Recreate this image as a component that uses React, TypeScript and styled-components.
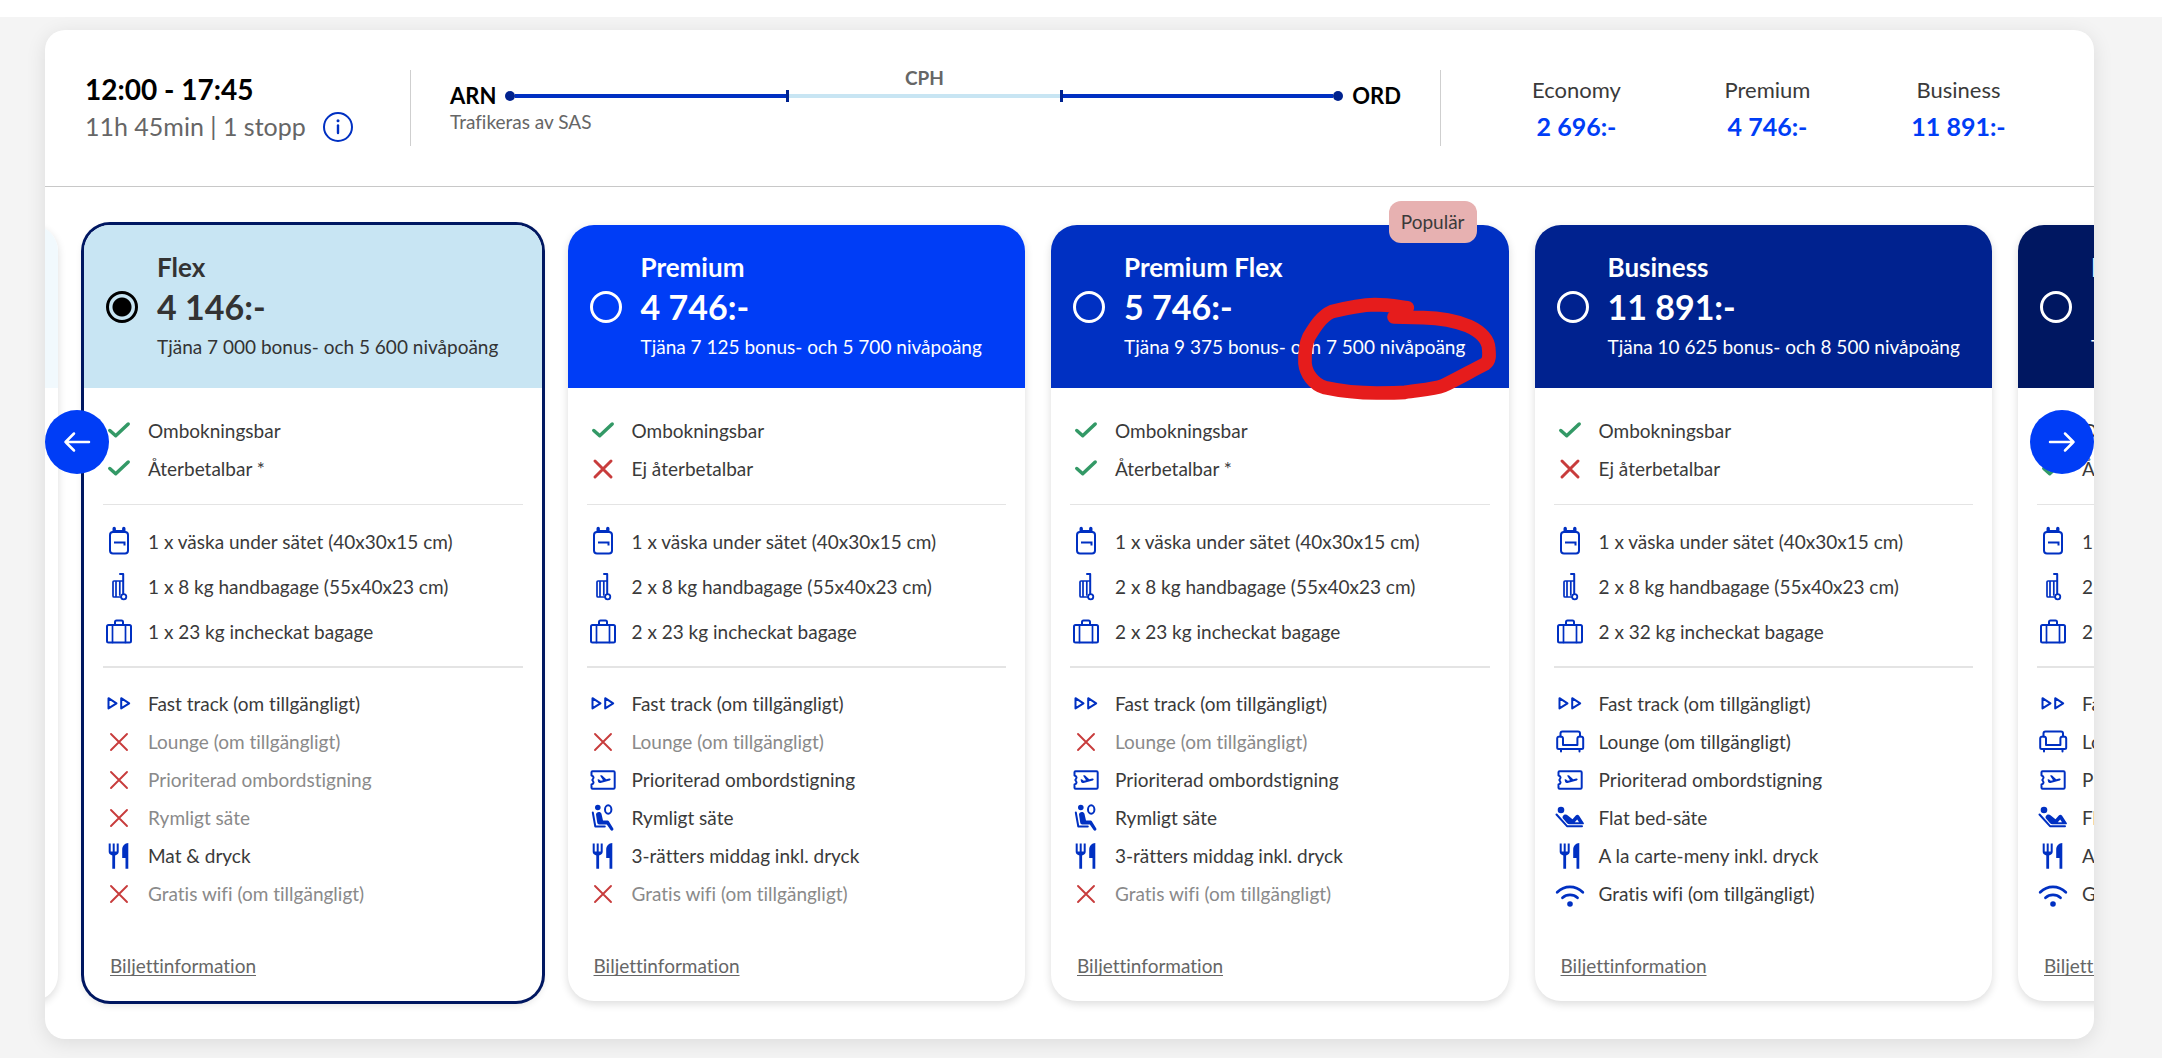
import React, { useState } from "react";
import styled, { createGlobalStyle } from "styled-components";

const color = {
  ink: "#3a3a3a",
  muted: "#8a8a8a",
  grey: "#666666",
  blue: "#003df6",
  deep: "#0030c2",
  navy: "#001761",
  rule: "#e4e4e4",
};

const GlobalStyle = createGlobalStyle`
  *, *::before, *::after { box-sizing: border-box; }
  body {
    margin: 0;
    background: #f4f4f4;
    color: ${color.ink};
    font-family: Lato, "Open Sans", sans-serif;
    font-size: 19px;
    font-variant-ligatures: none;
  }
`;

/* ---------- page ---------- */

const Page = styled.div`
  border-top: 17px solid #ffffff;
  padding: 13px 68px 19px 45px;
  overflow: hidden;
`;

const Panel = styled.article`
  position: relative;
  background: #ffffff;
  border-radius: 20px;
  box-shadow: 0 4px 20px rgba(0, 0, 0, 0.1);
  overflow: hidden;
`;

/* ---------- flight summary ---------- */

const Summary = styled.header`
  display: flex;
  padding: 40px 0;
  border-bottom: 1px solid #c8c8c8;
`;

const Times = styled.div`
  flex: none;
  width: 366px;
  padding-left: 40px;
  border-right: 1px solid #cfcfcf;
  display: flex;
  flex-direction: column;
  justify-content: center;
`;

const TimeRange = styled.h2`
  margin: 0;
  font-size: 28px;
  line-height: 37px;
  font-weight: 700;
  color: #000000;
`;

const Duration = styled.div`
  display: flex;
  align-items: center;
  gap: 16px;
  font-size: 25px;
  line-height: 37px;
  color: ${color.grey};
`;

const InfoButton = styled.button`
  display: flex;
  padding: 0;
  border: 0;
  background: none;
  color: ${color.deep};
  cursor: pointer;
`;

const Route = styled.div`
  flex: 1;
  min-width: 0;
  padding: 0 39px;
  display: grid;
  grid-template-columns: auto 1fr auto;
  grid-template-rows: 16px 20px 40px;
  column-gap: 9px;
  align-items: center;
`;

const StopCode = styled.span`
  grid-column: 2;
  justify-self: center;
  font-size: 19px;
  line-height: 16px;
  font-weight: 700;
  color: ${color.grey};
`;

const Airport = styled.span<{ $column: number }>`
  grid-column: ${(p) => p.$column};
  grid-row: 2;
  font-size: 22px;
  line-height: 20px;
  font-weight: 700;
  color: #000000;
`;

const Track = styled.div`
  grid-column: 2;
  grid-row: 2;
  display: flex;
  align-items: center;
`;

const Dot = styled.i`
  width: 10px;
  height: 10px;
  border-radius: 50%;
  background: #00228f;
`;

const Tick = styled.i`
  width: 3px;
  height: 12px;
  background: #00228f;
`;

const Leg = styled.i<{ $wait?: boolean }>`
  flex: 1;
  height: 4px;
  background: ${(p) => (p.$wait ? "#c8e5f3" : color.deep)};
`;

const Carrier = styled.span`
  grid-column: 1 / -1;
  grid-row: 3;
  align-self: start;
  line-height: 32px;
  color: ${color.grey};
`;

const Cabins = styled.dl`
  flex: none;
  width: 654px;
  margin: 0;
  padding: 0 40px;
  border-left: 1px solid #cfcfcf;
  display: grid;
  grid-template-columns: repeat(3, 1fr);
  align-content: center;
  text-align: center;
`;

const CabinName = styled.dt`
  font-size: 22px;
  line-height: 37px;
`;

const CabinPrice = styled.dd`
  margin: 0;
  font-size: 25px;
  line-height: 37px;
  font-weight: 700;
  color: ${color.blue};
`;

/* ---------- fare carousel ---------- */

const Fares = styled.section`
  position: relative;
  overflow: hidden;
  padding: 38px 0;
`;

const Cards = styled.div`
  --card: calc((100% - 219px) / 4);
  display: grid;
  grid-auto-flow: column;
  grid-auto-columns: var(--card);
  column-gap: 26px;
  width: 100%;
  margin-left: calc(13px - (100% - 219px) / 4);
`;

const Card = styled.div<{ $selected?: boolean }>`
  position: relative;
  display: flex;
  flex-direction: column;
  border-radius: 26px;
  background: #ffffff;
  box-shadow: ${(p) => (p.$selected ? `0 0 0 3px ${color.navy}, ` : "")}0 3px 8px rgba(0, 0, 0, 0.14);
`;

const CardHead = styled.label<{ $bg: string; $dark?: boolean }>`
  display: flex;
  align-items: center;
  gap: 19px;
  height: 163px;
  padding-left: 22px;
  border-radius: 26px 26px 0 0;
  background: ${(p) => p.$bg};
  color: ${(p) => (p.$dark ? "#333333" : "#ffffff")};
  white-space: nowrap;
  cursor: pointer;
`;

const Radio = styled.input`
  appearance: none;
  flex: none;
  width: 32px;
  height: 32px;
  margin: 0;
  border: 3px solid #ffffff;
  border-radius: 50%;
  cursor: pointer;
  &:checked {
    border-color: #000000;
    background: radial-gradient(circle, #000000 9px, transparent 10px);
  }
`;

const FareName = styled.strong`
  display: block;
  font-size: 26px;
  line-height: 36px;
  font-weight: 700;
`;

const FarePrice = styled.strong`
  display: block;
  font-size: 34px;
  line-height: 44px;
  font-weight: 700;
`;

const Points = styled.span`
  display: block;
  line-height: 36px;
`;

const Badge = styled.span`
  position: absolute;
  top: -24px;
  right: 32px;
  padding: 0 12px;
  border-radius: 12px;
  background: #e7b1b1;
  color: ${color.ink};
  line-height: 42px;
`;

const Marker = styled.svg`
  position: absolute;
  z-index: 2;
  top: -35px;
  left: 239px;
  pointer-events: none;
`;

const CardBody = styled.div`
  padding: 24px 19px 23px;
`;

const Group = styled.ul<{ $row: number }>`
  margin: 0;
  padding: 0;
  list-style: none;
  line-height: ${(p) => p.$row}px;
`;

const Item = styled.li<{ $off?: boolean }>`
  display: flex;
  align-items: center;
  gap: 13px;
  white-space: nowrap;
  color: ${(p) => (p.$off ? color.muted : color.ink)};
`;

const Rule = styled.hr<{ $weight: number }>`
  margin: ${(p) => (p.$weight === 1 ? "16px 0 14px" : "12px 0 17px")};
  border: 0;
  border-top: ${(p) => p.$weight}px solid ${color.rule};
`;

const TicketLink = styled.a`
  display: inline-block;
  margin: 41px 0 0 7px;
  line-height: 24px;
  color: ${color.grey};
  text-decoration: underline;
  text-decoration-skip-ink: none;
  text-underline-offset: 2px;
`;

const Arrow = styled.button<{ $side: "left" | "right" }>`
  position: absolute;
  z-index: 3;
  top: 223px;
  ${(p) => p.$side}: 0;
  display: grid;
  place-items: center;
  width: 64px;
  height: 64px;
  padding: 0;
  border: 0;
  border-radius: 50%;
  background: ${color.blue};
  color: #ffffff;
  cursor: pointer;
`;

/* ---------- icons ---------- */

const Glyph = styled.svg`
  flex: none;
  display: block;
  width: 32px;
  height: 32px;
  fill: none;
  stroke: currentColor;
  stroke-width: 2;
  stroke-linecap: round;
  stroke-linejoin: round;
`;

const iconColor: Record<string, string> = {
  check: "#339966",
  cross: "#c83c3c",
  crossThin: "#c83c3c",
};

const shapes: Record<string, React.ReactNode> = {
  check: <path d="M6.8 15.5 12.7 20.7 25.2 9" strokeWidth="3.5" />,
  cross: <path d="M8 8 24 24M24 8 8 24" strokeWidth="3" />,
  crossThin: <path d="M8 8 24 24M24 8 8 24" strokeWidth="1.9" />,
  backpack: (
    <>
      <rect x="7" y="6" width="18" height="21.5" rx="3" />
      <path d="M9.5 5V2.5a1.6 1.6 0 0 1 3.4 0V4h6.2V2.5a1.6 1.6 0 0 1 3.4 0V5l1.5 2h-16z" fill="currentColor" stroke="none" />
      <path d="M11 16.5h10.5v3" strokeLinecap="butt" strokeLinejoin="miter" />
    </>
  ),
  trolley: (
    <>
      <path d="M17 3h3.2v19.5" />
      <path d="M20 10h-9a1 1 0 0 0-1 1v14a1 1 0 0 0 1 1h6.5M13 10v16M16.8 10v14" strokeWidth="1.7" />
      <circle cx="20.7" cy="25.7" r="2.6" strokeWidth="1.8" />
    </>
  ),
  suitcase: (
    <>
      <rect x="4" y="9" width="24" height="17.5" rx="1.5" />
      <path d="M12 9V6a1.5 1.5 0 0 1 1.5-1.5h5A1.5 1.5 0 0 1 20 6v3" />
      <path d="M9.5 9v17.5M22.5 9v17.5" strokeWidth="1.7" />
    </>
  ),
  fast: <path d="M5.5 10.2v10.2L13.5 15.3zM18.2 10.2v10.2L26.2 15.3z" />,
  sofa: (
    <>
      <path d="M6.5 10.5V7.5a2 2 0 0 1 2-2h15.5a2 2 0 0 1 2 2v3" />
      <path d="M9 19v-6.5c0-2.8-5.8-2.8-5.8 0V21.5a1.5 1.5 0 0 0 1.5 1.5h23a1.5 1.5 0 0 0 1.5-1.5V12.5c0-2.8-5.8-2.8-5.8 0V19z" />
      <path d="M7 23.5v2M25.5 23.5v2" />
    </>
  ),
  ticket: (
    <>
      <path d="M5.5 7.3h21a1.2 1.2 0 0 1 1.2 1.2v15a1.2 1.2 0 0 1-1.2 1.2h-21a1 1 0 0 1-1-1v-3.2c3.2-1 2-2.8.8-4.5 1.2-1.7 2.4-3.5-.8-4.5V8.3a1 1 0 0 1 1-1z" />
      <path d="M10.5 15.5l1.3-.3 2 1.6 2.2-.5-3-4.8 1.9-.3 4.3 4.1 3-.7c1.5-.3 2.2 1.3.6 1.8l-9.3 2.6c-1.2.2-1.9-.2-2.3-.9z" fill="currentColor" stroke="none" />
    </>
  ),
  seat: (
    <>
      <circle cx="10.8" cy="5.5" r="2.8" fill="currentColor" stroke="none" />
      <ellipse cx="21.2" cy="7.5" rx="3.2" ry="4.2" />
      <path d="M5.8 10.5 8.3 24.5h9.5" />
      <path d="M9 12.5c0-3 4.8-3.5 5.5-.5l1.5 6.5h4c1 0 1.8.5 2.3 1.4l4 6.6c.8 1.8-1.6 3-2.7 1.5l-3.8-5.5h-7.5c-1.2 0-1.9-.8-2.1-2z" fill="currentColor" stroke="none" />
    </>
  ),
  bed: (
    <>
      <circle cx="7" cy="8" r="3.3" fill="currentColor" stroke="none" />
      <path d="M2.5 12.5 13 24.2h15" />
      <path d="M9 14c1.3-2 3.5-1.7 4.8-.5l4.7 3.7 3.3-3.7c1-1 2.4-1 3.3.2l4.7 7.3c.4.8-.2 1.3-1 1.3H15.500c-1 0-1.8-.4-2.4-1.1L9 16.5c-.6-.8-.6-1.7 0-2.5z" fill="currentColor" stroke="none" />
      <path d="M20.8 20.3h4.2l-1.8-2.7z" fill="#fff" stroke="none" />
    </>
  ),
  food: (
    <>
      <path d="M5.7 3.5v8.3a5 3.8 0 0 0 3.6 3.6v13.3h2.8V15.4a5 3.8 0 0 0 3.6-3.6V3.5h-2v8h-2v-8h-2v8h-2v-8z" fill="currentColor" stroke="none" />
      <path d="M25.3 3v25.7h-2.8V18h-3.3V9.5c0-3.5 2.6-6.5 6.1-6.5z" fill="currentColor" stroke="none" />
    </>
  ),
  wifi: (
    <>
      <path d="M3.2 14.2c7.5-7 18-7 25.600 0M8.5 19.7c4.3-3.8 10.7-3.8 15 0" strokeWidth="2.8" />
      <circle cx="16" cy="26" r="2.8" fill="currentColor" stroke="none" />
    </>
  ),
};

function Icon({ name }: { name: string }) {
  return (
    <Glyph viewBox="0 0 32 32" color={iconColor[name] ?? color.deep} aria-hidden>
      {shapes[name]}
    </Glyph>
  );
}

/* ---------- data ---------- */

type Entry = [icon: string, text: string];

interface Fare {
  name: string;
  price: string;
  bonus: string;
  level: string;
  bg: string;
  refundable: boolean;
  bags: [string, string];
  perks: Entry[];
}

const FAST: Entry = ["fast", "Fast track (om tillgängligt)"];
const NO_LOUNGE: Entry = ["crossThin", "Lounge (om tillgängligt)"];
const PRIORITY: Entry = ["ticket", "Prioriterad ombordstigning"];
const NO_WIFI: Entry = ["crossThin", "Gratis wifi (om tillgängligt)"];

const premiumPerks: Entry[] = [
  FAST,
  NO_LOUNGE,
  PRIORITY,
  ["seat", "Rymligt säte"],
  ["food", "3-rätters middag inkl. dryck"],
  NO_WIFI,
];

const businessPerks: Entry[] = [
  FAST,
  ["sofa", "Lounge (om tillgängligt)"],
  PRIORITY,
  ["bed", "Flat bed-säte"],
  ["food", "A la carte-meny inkl. dryck"],
  ["wifi", "Gratis wifi (om tillgängligt)"],
];

const fares: Fare[] = [
  {
    name: "Flex", price: "4 146:-", bonus: "7 000", level: "5 600", bg: "#c8e5f3",
    refundable: true, bags: ["1 x 8 kg", "1 x 23 kg"],
    perks: [
      FAST,
      NO_LOUNGE,
      ["crossThin", "Prioriterad ombordstigning"],
      ["crossThin", "Rymligt säte"],
      ["food", "Mat & dryck"],
      NO_WIFI,
    ],
  },
  {
    name: "Premium", price: "4 746:-", bonus: "7 125", level: "5 700", bg: "#003df6",
    refundable: false, bags: ["2 x 8 kg", "2 x 23 kg"], perks: premiumPerks,
  },
  {
    name: "Premium Flex", price: "5 746:-", bonus: "9 375", level: "7 500", bg: "#0030c2",
    refundable: true, bags: ["2 x 8 kg", "2 x 23 kg"], perks: premiumPerks,
  },
  {
    name: "Business", price: "11 891:-", bonus: "10 625", level: "8 500", bg: "#00228f",
    refundable: false, bags: ["2 x 8 kg", "2 x 32 kg"], perks: businessPerks,
  },
  {
    name: "Business Flex", price: "", bonus: "", level: "", bg: "#001761",
    refundable: true, bags: ["2 x 8 kg", "2 x 32 kg"], perks: businessPerks,
  },
];

const cabins = [
  ["Economy", "2 696:-"],
  ["Premium", "4 746:-"],
  ["Business", "11 891:-"],
];

/* ---------- components ---------- */

function FareCard({ fare, selected, onSelect }: { fare: Fare; selected: boolean; onSelect: () => void }) {
  const popular = fare.name === "Premium Flex";
  return (
    <Card $selected={selected}>
      <CardHead $bg={fare.bg} $dark={fare.name === "Flex"}>
        <Radio type="radio" name="fare" checked={selected} onChange={onSelect} />
        <span>
          <FareName>{fare.name}</FareName>
          <FarePrice>{fare.price || "\u00a0"}</FarePrice>
          <Points>
            Tjäna {fare.bonus} bonus- och {fare.level} nivåpoäng
          </Points>
        </span>
      </CardHead>
      {popular && <Badge>Populär</Badge>}
      {popular && (
        <Marker width="240" height="220" viewBox="0 0 720 660" aria-hidden>
          <path
            d="M352 353C320 349 290 344 255 344C210 345 165 355 125 365C95 378 75 410 57 440C45 465 44 490 45 520C48 550 70 583 105 593C160 605 215 609 260 609C290 609 320 609 345 607C390 600 430 598 460 587C500 568 540 545 585 522C600 512 598 495 596 475C594 445 565 422 535 408C490 390 440 384 400 383L312 381"
            fill="none"
            stroke="#e61c1c"
            strokeWidth="41"
            strokeLinecap="round"
            strokeLinejoin="round"
          />
        </Marker>
      )}
      <CardBody>
        <Group $row={38}>
          <Item><Icon name="check" />Ombokningsbar</Item>
          {fare.refundable ? (
            <Item><Icon name="check" />Återbetalbar *</Item>
          ) : (
            <Item><Icon name="cross" />Ej återbetalbar</Item>
          )}
        </Group>
        <Rule $weight={1} />
        <Group $row={45}>
          <Item><Icon name="backpack" />1 x väska under sätet (40x30x15 cm)</Item>
          <Item><Icon name="trolley" />{fare.bags[0]} handbagage (55x40x23 cm)</Item>
          <Item><Icon name="suitcase" />{fare.bags[1]} incheckat bagage</Item>
        </Group>
        <Rule $weight={2} />
        <Group $row={38}>
          {fare.perks.map(([icon, text]) => (
            <Item key={text} $off={icon === "crossThin"}>
              <Icon name={icon} />
              {text}
            </Item>
          ))}
        </Group>
        <TicketLink href="#biljettinformation">Biljettinformation</TicketLink>
      </CardBody>
    </Card>
  );
}

export default function App() {
  const [selected, setSelected] = useState("Flex");
  return (
    <>
      <GlobalStyle />
      <Page>
        <Panel>
          <Summary>
            <Times>
              <TimeRange>12:00 - 17:45</TimeRange>
              <Duration>
                11h 45min | 1 stopp
                <InfoButton type="button" aria-label="Flyginformation">
                  <svg width="32" height="32" viewBox="0 0 32 32" fill="none" stroke="currentColor" strokeWidth="2">
                    <circle cx="16" cy="16" r="14" />
                    <path d="M16 14.5v7.5" strokeWidth="2.4" strokeLinecap="round" />
                    <circle cx="16" cy="9.8" r="1.5" fill="currentColor" stroke="none" />
                  </svg>
                </InfoButton>
              </Duration>
            </Times>
            <Route>
              <StopCode>CPH</StopCode>
              <Airport $column={1}>ARN</Airport>
              <Track>
                <Dot />
                <Leg />
                <Tick />
                <Leg $wait />
                <Tick />
                <Leg />
                <Dot />
              </Track>
              <Airport $column={3}>ORD</Airport>
              <Carrier>Trafikeras av SAS</Carrier>
            </Route>
            <Cabins>
              {cabins.map(([name, price]) => (
                <div key={name}>
                  <CabinName>{name}</CabinName>
                  <CabinPrice>{price}</CabinPrice>
                </div>
              ))}
            </Cabins>
          </Summary>

          <Fares>
            <Cards>
              <Card aria-hidden>
                <CardHead as="div" $bg="#f1f9fd" />
              </Card>
              {fares.map((fare) => (
                <FareCard
                  key={fare.name}
                  fare={fare}
                  selected={selected === fare.name}
                  onSelect={() => setSelected(fare.name)}
                />
              ))}
            </Cards>
            <Arrow $side="left" type="button" aria-label="Föregående">
              <svg width="32" height="32" viewBox="0 0 32 32" fill="none" stroke="currentColor" strokeWidth="2.5" strokeLinecap="round" strokeLinejoin="round">
                <path d="M28 16H4.5M13 7.5 4.5 16 13 24.5" />
              </svg>
            </Arrow>
            <Arrow $side="right" type="button" aria-label="Nästa">
              <svg width="32" height="32" viewBox="0 0 32 32" fill="none" stroke="currentColor" strokeWidth="2.5" strokeLinecap="round" strokeLinejoin="round">
                <path d="M4 16h23.5M19 7.5 27.5 16 19 24.5" />
              </svg>
            </Arrow>
          </Fares>
        </Panel>
      </Page>
    </>
  );
}
